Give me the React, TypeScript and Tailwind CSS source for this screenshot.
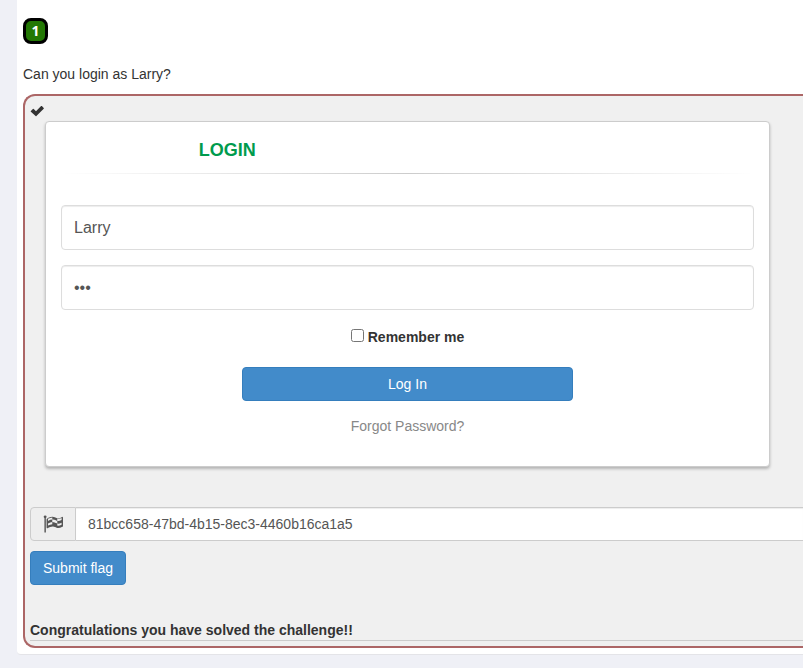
import { useState } from "react";

function CheckIcon() {
  return (
    <svg viewBox="0 0 14 12" className="h-3 w-3.5" role="img" aria-label="Solved">
      <path
        fill="#333333"
        d="M.9 6 2.900 4q.4-.4.8 0L6 6.200 11.100 1.100q.4-.4.8 0l1.800 1.800q.4.4 0 .8L6.400 11q-.4.4-.8 0L.9 6.800q-.4-.4 0-.8z"
      />
    </svg>
  );
}

function CheckeredFlagIcon() {
  return (
    <svg viewBox="0 0 1792 1792" className="size-5" aria-hidden="true">
      <path
        fill="#555555"
        d="M832 919v-192q-181 16-384 117v185q205-96 384-110zm0-418v-197q-172 8-384 126v189q215-111 384-118zm832 463v-184q-235 116-384 71v-224q-20-6-39-15-5-3-33-17t-34.500-17-31.500-15-34.500-15.500-32.500-13-36-12.500-35-8.500-39.500-7.500-39.500-4-44-2q-23 0-49 3v222h19q102 0 192.500 29t197.500 82q19 9 39 15v188q42 17 91 17 120 0 293-92zm0-427v-189q-169 91-306 91-45 0-78-8v196q148 42 384-90zM320 256q0 35-17.500 64t-46.500 46v1266q0 14-9 23t-23 9h-64q-14 0-23-9t-9-23v-1266q-29-17-46.500-46t-17.500-64q0-53 37.500-90.500t90.500-37.500 90.500 37.500 37.500 90.500zm1472 64v763q0 39-35 57-10 5-17 9-218 116-369 116-88 0-158-35l-28-14q-64-33-99-48t-91-29-114-14q-102 0-235.500 44t-228.500 102q-15 9-33 9-16 0-32-8-32-19-32-56v-742q0-35 31-55 35-21 78.500-42.500t114-52 152.500-49.500 155-19q112 0 209 31t209 86q38 19 89 19 122 0 310-112 22-12 31-17 31-16 62 2 31 20 31 54z"
      />
    </svg>
  );
}

const field =
  "block h-[45px] w-full rounded border border-[#dddddd] bg-white px-3 text-base text-[#555555] shadow-[inset_0_1px_1px_rgba(0,0,0,0.075)] outline-none";
const button =
  "h-[34px] rounded border border-[#357ebd] bg-[#428bca] px-3 text-sm leading-5 text-white";

function LoginForm() {
  const [user, setUser] = useState("Larry");
  const [password, setPassword] = useState("abc");
  return (
    <form
      onSubmit={(e) => e.preventDefault()}
      className="mr-[33px] ml-5 flex flex-col rounded border border-[#cccccc] bg-white px-[15px] pt-4 pb-[30px] shadow-[0_2px_3px_rgba(0,0,0,0.25)]"
    >
      <h2 className="w-[48%] text-center text-lg leading-6 font-bold text-[#009b4d]">LOGIN</h2>
      <div className="mt-[11px] h-px bg-linear-to-r from-transparent via-[#cccccc] to-transparent" />
      <div className="mt-[31px] flex flex-col gap-[15px]">
        <input
          aria-label="Username"
          value={user}
          onChange={(e) => setUser(e.target.value)}
          className={field}
        />
        <input
          aria-label="Password"
          type="password"
          value={password}
          onChange={(e) => setPassword(e.target.value)}
          className={field}
        />
      </div>
      <label className="mt-[17px] flex justify-center gap-1 font-bold">
        <input type="checkbox" className="mt-0.5 size-[13px]" />
        Remember me
      </label>
      <div className="mt-5 w-1/2 self-center px-2">
        <button type="submit" className={`${button} w-full`}>
          Log In
        </button>
      </div>
      <a href="#forgot" className="mt-[15px] self-center text-[#888888]">
        Forgot Password?
      </a>
    </form>
  );
}

export default function App() {
  const [flag, setFlag] = useState("81bcc658-47bd-4b15-8ec3-4460b16ca1a5");
  return (
    <div className="min-h-screen overflow-hidden bg-[#eff0f6] pl-[17px] font-['Liberation_Sans',Arial,sans-serif] text-sm leading-5 text-[#333333]">
      <main className="rounded-bl border-b border-[#e4e4e8] bg-white pt-[18px] pb-1.5 pl-1.5">
        <span className="flex h-[26px] w-[25px] items-center justify-center rounded-lg border-3 border-black bg-[#237804] font-['Open_Sans',sans-serif] text-sm font-bold text-white">
          1
        </span>
        <p className="mt-5">Can you login as Larry?</p>
        <section className="mt-2.5 rounded-l-xl border-2 border-r-0 border-[#ac6666] bg-[#f0f0f0] pt-[5px] pb-[5px] pl-[5px]">
          <div className="flex h-5 items-center">
            <CheckIcon />
          </div>
          <div className="-ml-[5px]">
            <LoginForm />
          </div>
          <form onSubmit={(e) => e.preventDefault()} className="mt-10">
            <div className="flex h-[34px]">
              <span className="flex w-[46px] items-center justify-center rounded-l border border-[#cccccc] bg-[#eeeeee]">
                <CheckeredFlagIcon />
              </span>
              <input
                aria-label="Flag"
                value={flag}
                onChange={(e) => setFlag(e.target.value)}
                className="min-w-0 flex-1 border-y border-[#cccccc] bg-white px-3 text-sm text-[#555555] shadow-[inset_0_1px_1px_rgba(0,0,0,0.075)] outline-none"
              />
            </div>
            <button type="submit" className={`${button} mt-2.5`}>
              Submit flag
            </button>
          </form>
          <p className="mt-[35px] border-b border-[#cccccc] font-bold">
            Congratulations you have solved the challenge!!
          </p>
        </section>
      </main>
    </div>
  );
}
